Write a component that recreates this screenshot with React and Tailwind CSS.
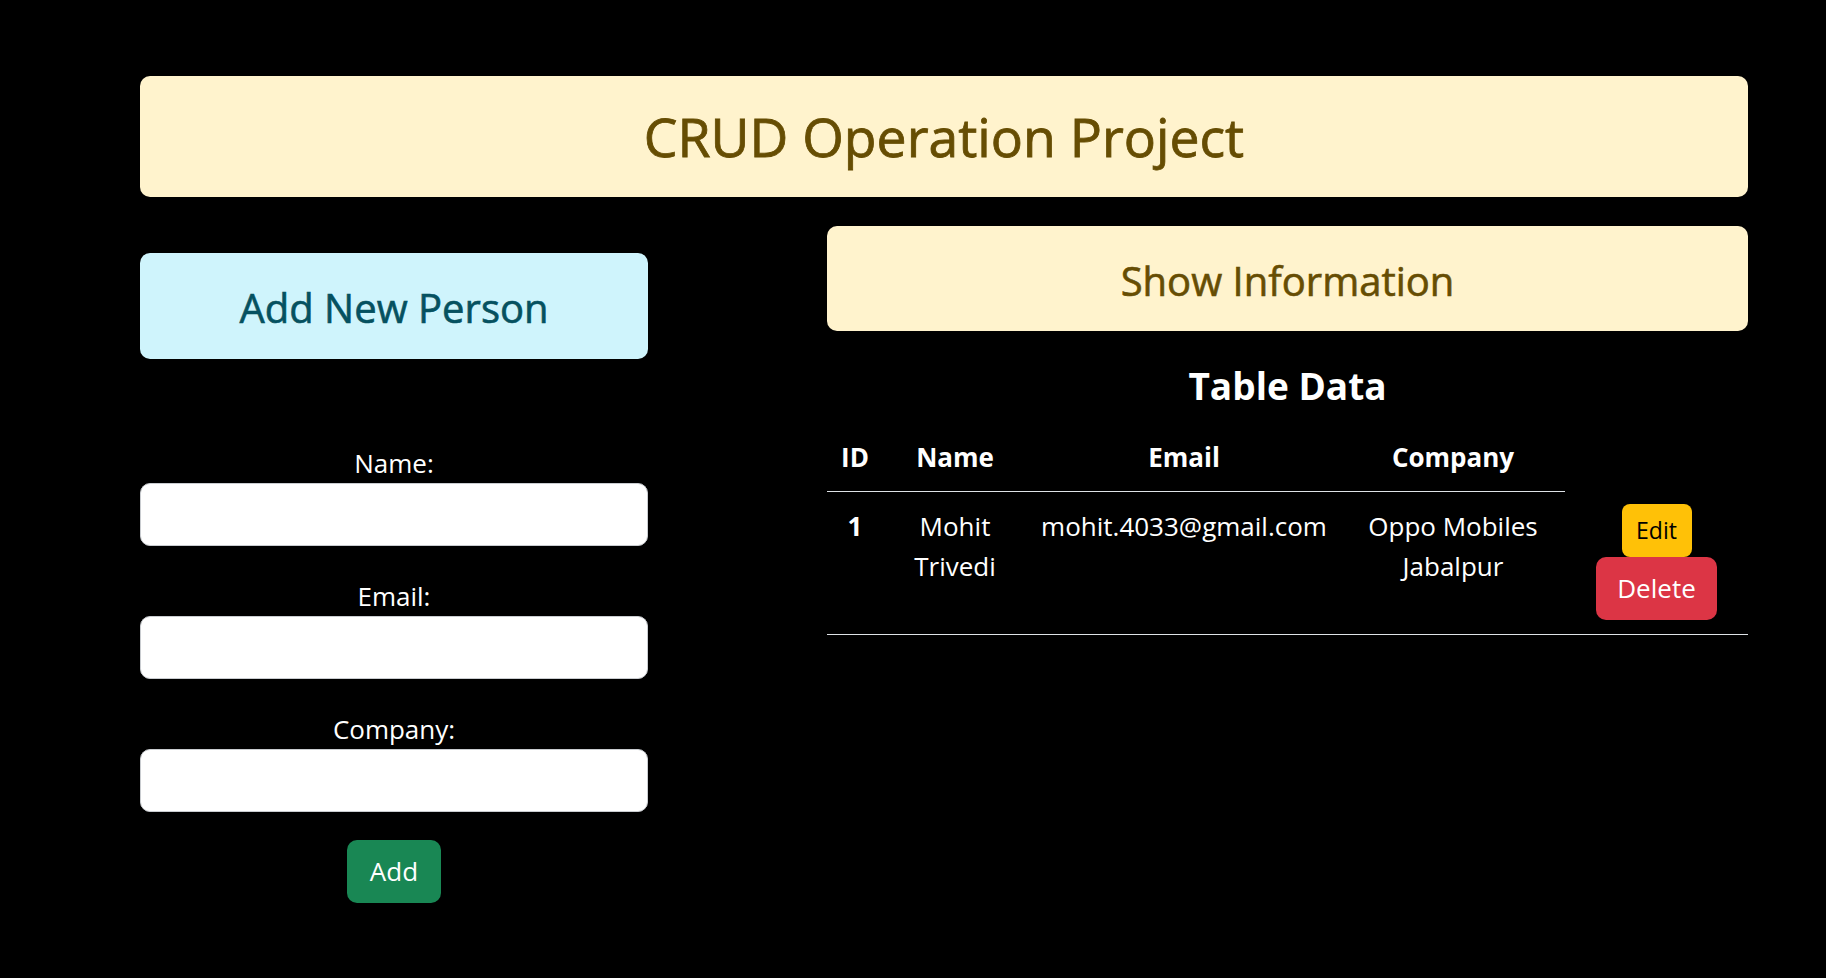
import { useState } from "react";

const PEOPLE = [
  { id: 1, name: "Mohit Trivedi", email: "mohit.4033@gmail.com", company: "Oppo Mobiles Jabalpur" },
];

function Field({ label, value, onChange }) {
  return (
    <div>
      <label className="block text-center text-[26px] leading-[40px] text-white">{label}</label>
      <input
        type="text"
        value={value}
        onChange={(e) => onChange(e.target.value)}
        className="block w-full h-[63px] rounded-[10px] border border-[#c9ccd0] bg-white px-5 text-[26px] text-black outline-none"
      />
    </div>
  );
}

export default function App() {
  const [name, setName] = useState("");
  const [email, setEmail] = useState("");
  const [company, setCompany] = useState("");

  return (
    <div className="min-h-screen bg-black text-white font-['Open_Sans',sans-serif]">
      <div className="ml-[140px] w-[1608px] pt-[76px]">
        {/* Header */}
        <div className="h-[121px] rounded-[10px] bg-[#fff3cd] flex items-center justify-center">
          <h1 className="text-[53.5px] leading-none [-webkit-text-stroke:0.8px_#664d03] text-[#664d03]">
            CRUD Operation Project
          </h1>
        </div>

        <div className="flex justify-between">
          {/* Form */}
          <div className="w-[508px] pt-[56px]">
            <div className="h-[106px] pt-[4px] rounded-[10px] bg-[#cff4fc] flex items-center justify-center">
              <h3 className="text-[40px] leading-none [-webkit-text-stroke:0.6px_#055160] text-[#055160]">
                Add New Person
              </h3>
            </div>

            <div className="mt-[84px] flex flex-col gap-[30px]">
              <Field label="Name:" value={name} onChange={setName} />
              <Field label="Email:" value={email} onChange={setEmail} />
              <Field label="Company:" value={company} onChange={setCompany} />
            </div>

            <div className="mt-[28px] flex justify-center">
              <button className="w-[94px] h-[63px] rounded-[10px] bg-[#198754] text-[26px] text-white">
                Add
              </button>
            </div>
          </div>

          {/* Table */}
          <div className="w-[921px] pt-[29px]">
            <div className="h-[105px] pt-[4px] rounded-[10px] bg-[#fff3cd] flex items-center justify-center">
              <h3 className="text-[40px] leading-none [-webkit-text-stroke:0.6px_#664d03] text-[#664d03]">
                Show Information
              </h3>
            </div>

            <h2 className="mt-[31px] mb-[13px] text-center text-[37px] leading-[48px] font-bold">Table Data</h2>

            <table className="w-full table-fixed border-collapse text-center text-[26px] leading-[40px]">
              <colgroup>
                <col className="w-[56px]" />
                <col className="w-[144px]" />
                <col className="w-[314px]" />
                <col className="w-[224px]" />
                <col className="w-[183px]" />
              </colgroup>
              <thead>
                <tr>
                  <th className="pt-[14px] pb-[14px] px-[13px] font-bold border-b border-[#dee2e6]">ID</th>
                  <th className="pt-[14px] pb-[14px] px-[13px] font-bold border-b border-[#dee2e6]">Name</th>
                  <th className="pt-[14px] pb-[14px] px-[13px] font-bold border-b border-[#dee2e6]">Email</th>
                  <th className="pt-[14px] pb-[14px] px-[13px] font-bold border-b border-[#dee2e6]">Company</th>
                </tr>
              </thead>
              <tbody>
                {PEOPLE.map((p) => (
                  <tr key={p.id} className="border-b border-[#dee2e6]">
                    <td className="align-top pt-[14px] px-[13px] font-bold">{p.id}</td>
                    <td className="align-top pt-[14px] px-[13px]">{p.name}</td>
                    <td className="align-top pt-[14px] px-[6px]">{p.email}</td>
                    <td className="align-top pt-[14px] px-[13px]">{p.company}</td>
                    <td className="align-top pt-[12px] pb-[14px] px-[13px]">
                      <div className="flex flex-col items-center">
                        <button className="w-[70px] h-[53px] rounded-[8px] bg-[#ffc107] text-[23px] text-black">
                          Edit
                        </button>
                        <button className="w-[121px] h-[63px] rounded-[10px] bg-[#dc3545] text-[26px] text-white">
                          Delete
                        </button>
                      </div>
                    </td>
                  </tr>
                ))}
              </tbody>
            </table>
          </div>
        </div>
      </div>
    </div>
  );
}
